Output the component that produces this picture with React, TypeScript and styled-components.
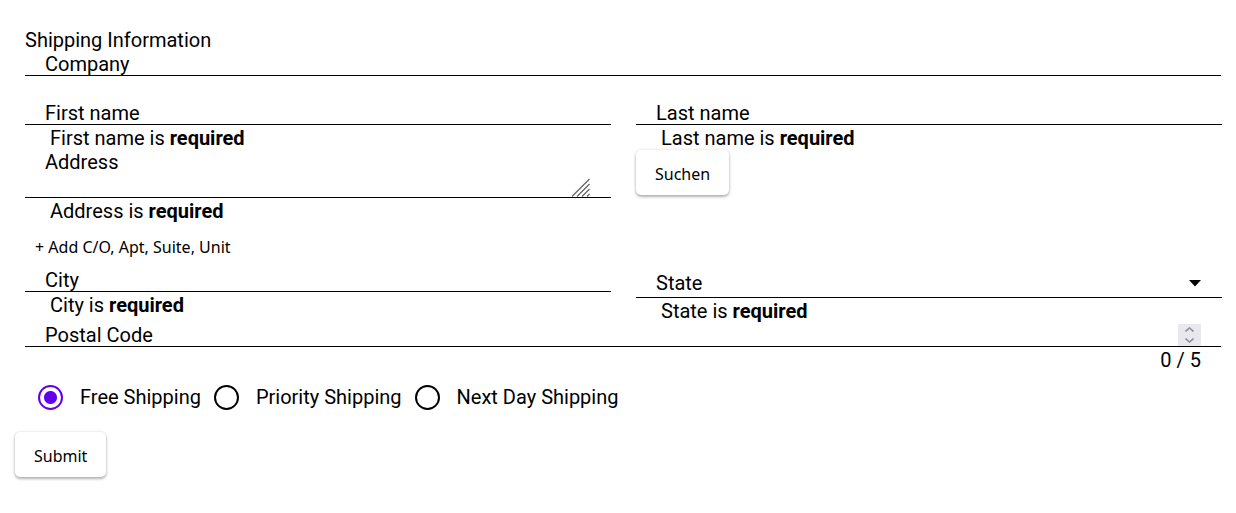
import React from 'react';
import styled, { createGlobalStyle } from 'styled-components';

const GlobalStyle = createGlobalStyle`
  *, *::before, *::after { box-sizing: border-box; }
  body {
    margin: 0;
    background: #fff;
    color: #000;
    font: 400 20px/24px Roboto, sans-serif;
  }
`;

const Form = styled.form`
  padding: 28px 15px 32px 25px;
`;

const Title = styled.h1`
  margin: 0;
  font-size: 20px;
  font-weight: 400;
  line-height: 24px;
`;

const Row = styled.div`
  display: grid;
  grid-template-columns: 1fr 1fr;
  column-gap: 25px;
  align-items: start;
  margin-right: -1px;
`;

const Column = styled.div`
  min-width: 0;
`;

const Field = styled.div<{ $height?: number }>`
  display: flex;
  height: ${(p) => p.$height ?? 24}px;
  padding: 0 20px;
  border-bottom: 1px solid #000;
`;

const Label = styled.label`
  flex: none;
  white-space: nowrap;
`;

const Input = styled.input`
  flex: 1;
  min-width: 0;
  padding: 0;
  border: 0;
  outline: 0;
  background: transparent;
  font: inherit;
  appearance: textfield;

  &::-webkit-inner-spin-button { display: none; }
`;

const TextArea = styled.textarea`
  flex: 1;
  min-width: 0;
  padding: 0;
  border: 0;
  outline: 0;
  resize: none;
  background: transparent;
  font: inherit;
`;

const Grip = styled.svg`
  flex: none;
  align-self: flex-end;
`;

const StateField = styled(Field)`
  align-items: center;
`;

const Select = styled.select`
  flex: 1;
  min-width: 0;
  padding: 0;
  border: 0;
  outline: 0;
  appearance: none;
  background: transparent;
  font: inherit;
`;

const Helper = styled.p`
  min-height: 25px;
  margin: 0;
  padding: 1px 25px 0;
`;

const Counter = styled.p`
  margin: 0;
  padding: 1px 20px 0;
  text-align: right;
`;

const Stepper = styled.div`
  flex: none;
  display: flex;
  flex-direction: column;
  align-self: flex-end;
  width: 23px;
  height: 22px;
  background: #e9e9ed;
`;

const StepButton = styled.button`
  display: flex;
  flex: 1;
  align-items: center;
  justify-content: center;
  padding: 0;
  border: 0;
  background: transparent;
`;

const TextButton = styled.button`
  display: block;
  height: 36px;
  margin: 6px 0 3px;
  padding: 0 10px;
  border: 0;
  background: transparent;
  color: #000;
  font: 400 16px/24px Tahoma, "Noto Sans", sans-serif;
`;

const RaisedButton = styled.button<{ $outdent?: boolean }>`
  display: block;
  height: 45px;
  margin-left: ${(p) => (p.$outdent ? -10 : 0)}px;
  padding: 2px 19px 0;
  border: 0;
  border-radius: 5px;
  background: #fff;
  box-shadow: 0 2px 3px rgba(0, 0, 0, 0.28), 0 0 3px rgba(0, 0, 0, 0.14);
  color: #000;
  font: 400 16px/24px Tahoma, "Noto Sans", sans-serif;
`;

const RadioGroup = styled.div`
  display: flex;
  align-items: center;
  height: 50px;
  margin-bottom: 10px;
`;

const RadioLabel = styled.label`
  display: flex;
  align-items: center;
  gap: 17px;
  padding-left: 13px;
  white-space: nowrap;
`;

const Radio = styled.input`
  width: 25px;
  height: 25px;
  margin: 0;
  border: 2px solid #000;
  border-radius: 50%;
  appearance: none;

  &:checked {
    border-color: #6200ee;
    background: radial-gradient(circle, #6200ee 6px, transparent 7px);
  }
`;

function Required({ name }: { name: string }) {
  return (
    <Helper>
      {name} is <b>required</b>
    </Helper>
  );
}

const shippingOptions = ['Free Shipping', 'Priority Shipping', 'Next Day Shipping'];

export default function App() {
  return (
    <>
      <GlobalStyle />
      <Form onSubmit={(e) => e.preventDefault()}>
        <Title>Shipping Information</Title>
        <Field>
          <Label htmlFor="company">Company</Label>
          <Input id="company" />
        </Field>
        <Helper />
        <Row>
          <Column>
            <Field>
              <Label htmlFor="first">First name</Label>
              <Input id="first" />
            </Field>
            <Required name="First name" />
          </Column>
          <Column>
            <Field>
              <Label htmlFor="last">Last name</Label>
              <Input id="last" />
            </Field>
            <Required name="Last name" />
          </Column>
        </Row>
        <Row>
          <Column>
            <Field $height={48}>
              <Label htmlFor="address">Address</Label>
              <TextArea id="address" />
              <Grip width="20" height="19" viewBox="0 0 20 19" stroke="#666" strokeWidth="1.3" aria-hidden="true">
                <path d="M1 18.5 18.5 1M6 18.5 18.5 6M11 18.5 18.5 11M16 18.5 18.5 16" />
              </Grip>
            </Field>
            <Required name="Address" />
          </Column>
          <Column>
            <RaisedButton type="button">Suchen</RaisedButton>
          </Column>
        </Row>
        <TextButton type="button">+ Add C/O, Apt, Suite, Unit</TextButton>
        <Row>
          <Column>
            <Field>
              <Label htmlFor="city">City</Label>
              <Input id="city" />
            </Field>
            <Required name="City" />
          </Column>
          <Column>
            <StateField $height={30}>
              <Label htmlFor="state">State</Label>
              <Select id="state" defaultValue="">
                <option value="" />
              </Select>
              <svg width="13" height="9" viewBox="0 0 13 9" aria-hidden="true">
                <path d="M0 2H12L6 8.500Z" fill="#000" />
              </svg>
            </StateField>
            <Required name="State" />
          </Column>
        </Row>
        <Field>
          <Label htmlFor="postal">Postal Code</Label>
          <Input id="postal" type="number" />
          <Stepper>
            <StepButton type="button" aria-label="Increase">
              <svg width="9" height="5" viewBox="0 0 9 5" fill="none" stroke="#8f8f9d" strokeWidth="1.6" aria-hidden="true">
                <path d="M.5 4.500 4.500 1 8.500 4.500" />
              </svg>
            </StepButton>
            <StepButton type="button" aria-label="Decrease">
              <svg width="9" height="5" viewBox="0 0 9 5" fill="none" stroke="#8f8f9d" strokeWidth="1.6" aria-hidden="true">
                <path d="M.5.5 4.500 4 8.500.5" />
              </svg>
            </StepButton>
          </Stepper>
        </Field>
        <Counter>0 / 5</Counter>
        <RadioGroup role="radiogroup" aria-label="Shipping">
          {shippingOptions.map((option, i) => (
            <RadioLabel key={option}>
              <Radio type="radio" name="shipping" defaultChecked={i === 0} />
              {option}
            </RadioLabel>
          ))}
        </RadioGroup>
        <RaisedButton type="submit" $outdent>Submit</RaisedButton>
      </Form>
    </>
  );
}
